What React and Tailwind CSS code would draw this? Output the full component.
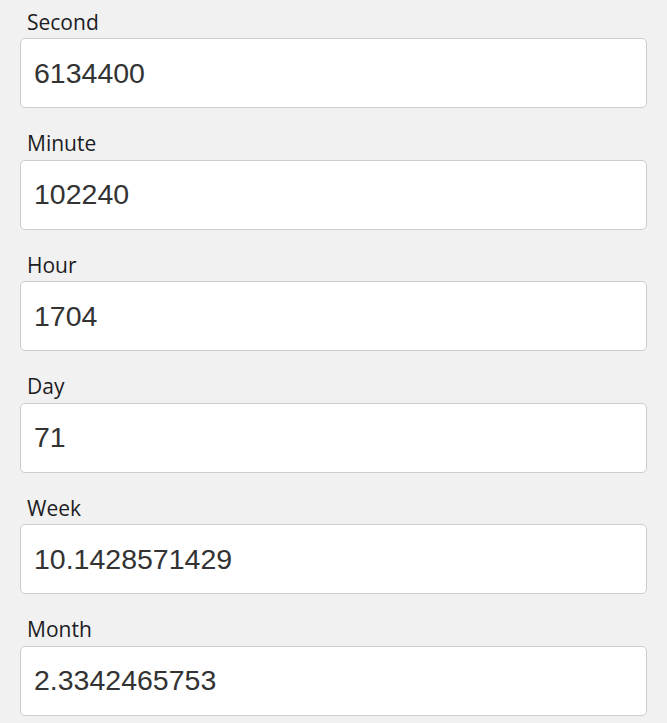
import { useState } from "react";

const units = [
  { label: "Second", value: "6134400" },
  { label: "Minute", value: "102240" },
  { label: "Hour", value: "1704" },
  { label: "Day", value: "71" },
  { label: "Week", value: "10.1428571429" },
  { label: "Month", value: "2.3342465753" },
];

function UnitField({ label, initial }) {
  const [value, setValue] = useState(initial);

  return (
    <div className="flex flex-col">
      <label className="pl-[7px] text-[21px] leading-[30px] text-[#1c1c24] font-['Open_Sans',sans-serif]">
        {label}
      </label>
      <input
        type="text"
        value={value}
        onChange={(e) => setValue(e.target.value)}
        className="mt-[1.5px] h-[70px] w-full rounded-[5px] border border-[#cccccc] bg-white pl-[13px] pr-3 text-[28.5px] text-[#333] outline-none font-['Liberation_Sans',Arial,sans-serif]"
      />
    </div>
  );
}

export default function App() {
  return (
    <div className="min-h-screen bg-[#f1f1f1] px-5 pt-[6.5px]">
      <div className="flex flex-col gap-[20.1px]">
        {units.map((unit) => (
          <UnitField key={unit.label} label={unit.label} initial={unit.value} />
        ))}
      </div>
    </div>
  );
}
